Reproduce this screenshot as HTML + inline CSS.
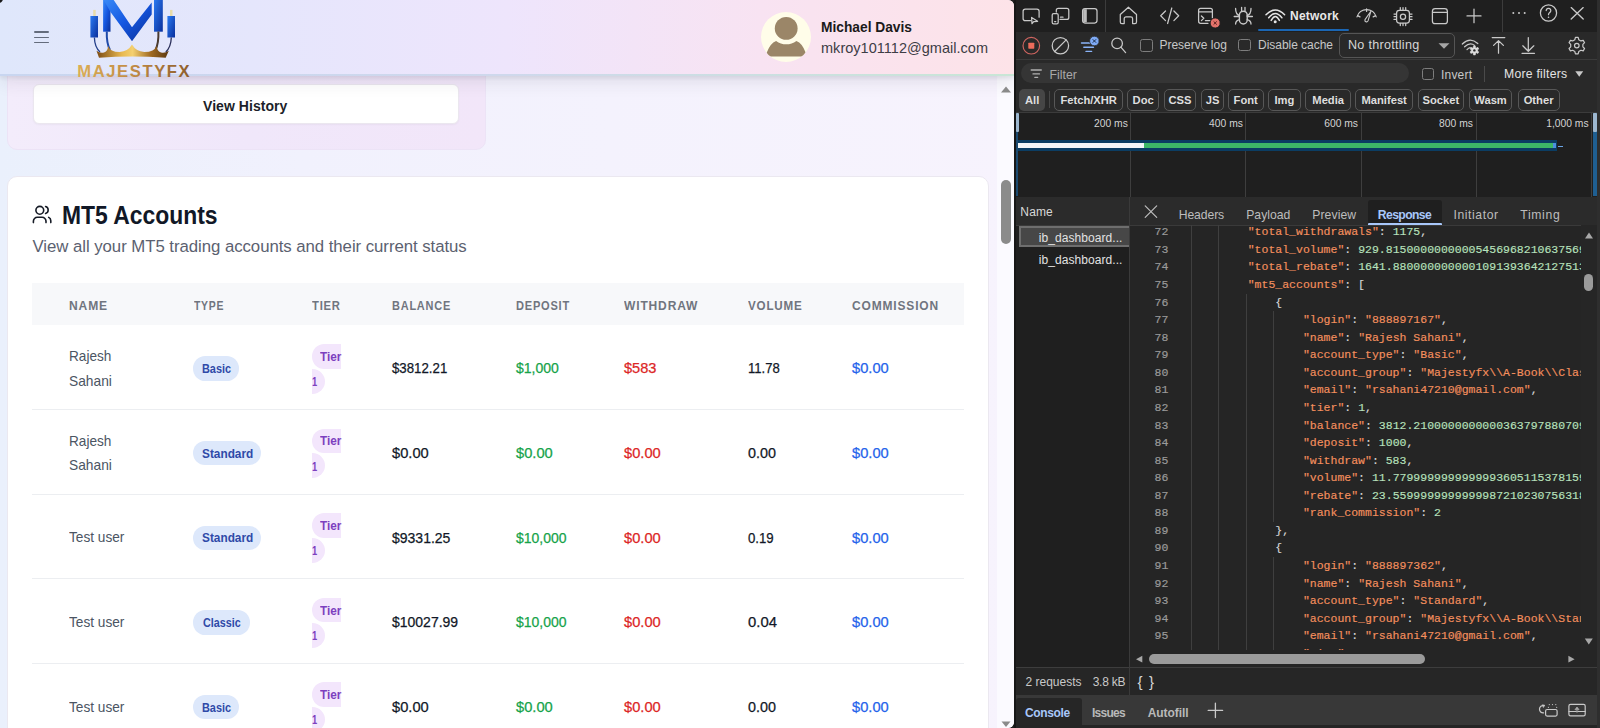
<!DOCTYPE html>
<html><head><meta charset="utf-8"><style>
html,body{margin:0;padding:0;width:1600px;height:728px;overflow:hidden;background:#1f1f1f;}
*{box-sizing:border-box;}
</style></head><body>
<div style="position:absolute;left:0;top:0;width:1014px;height:728px;overflow:hidden;border-radius:0 6px 6px 0;background:linear-gradient(90deg,#eaf0fc 0%,#f1f1fd 30%,#f4f2fd 60%,#f7f3fd 100%);"><div style="position:absolute;left:997px;top:76px;width:17px;height:652px;background:#fbfaff;"></div><div style="position:absolute;left:7px;top:20px;width:479px;height:130px;border-radius:10px;border:1px solid #ece3f6;background:linear-gradient(90deg,#f3ecfb,#f0e7fa 50%,#f2e6f9);"></div><div style="position:absolute;left:33px;top:84px;width:426px;height:40px;border-radius:6px;background:#fff;border:1px solid #ebe7ef;box-shadow:0 1px 2px rgba(0,0,0,0.04);"></div><div style="position:absolute;left:203px;top:98.65px;font:bold 14px/14px 'Liberation Sans', sans-serif;color:#1c1f2a;letter-spacing:0.050px;white-space:pre;">View History</div><div style="position:absolute;left:0;top:0;width:1014px;height:76px;background:linear-gradient(90deg,#dfe7fb 0%,#e5e6fc 25%,#eee5fc 50%,#f8e3f2 75%,#fde3e8 100%);border-bottom:2px solid transparent;box-shadow:0 2px 4px rgba(40,40,60,0.08),0 6px 16px rgba(40,40,60,0.10);"></div><div style="position:absolute;left:0;top:74px;width:1014px;height:2px;background:linear-gradient(90deg,#c9d6f0,#cfd8ec 50%,#c9e6d6);"></div><div style="position:absolute;left:34px;top:31.4px;width:15px;height:1.2px;background:#646c7c;border-radius:1px;"></div><div style="position:absolute;left:34px;top:36.699999999999996px;width:15px;height:1.2px;background:#646c7c;border-radius:1px;"></div><div style="position:absolute;left:34px;top:42.0px;width:15px;height:1.2px;background:#646c7c;border-radius:1px;"></div><svg style="position:absolute;left:70px;top:0" width="130" height="80" viewBox="70 0 130 80">
<defs>
<linearGradient id="bl" x1="0" y1="0" x2="1" y2="1"><stop offset="0" stop-color="#2a7af2"/><stop offset="1" stop-color="#0a2f9c"/></linearGradient>
<linearGradient id="bl2" x1="0" y1="0" x2="1" y2="1"><stop offset="0" stop-color="#3a8cf8"/><stop offset="0.5" stop-color="#1456e0"/><stop offset="1" stop-color="#0b2f96"/></linearGradient>
<linearGradient id="gd" x1="0" y1="0" x2="1" y2="0"><stop offset="0" stop-color="#7a4a14"/><stop offset="0.35" stop-color="#e8b850"/><stop offset="0.5" stop-color="#f4d070"/><stop offset="0.75" stop-color="#a06a22"/><stop offset="1" stop-color="#5a3810"/></linearGradient>
<linearGradient id="gt" x1="0" y1="0" x2="1" y2="0"><stop offset="0" stop-color="#dcae55"/><stop offset="0.5" stop-color="#c08a45"/><stop offset="1" stop-color="#8e5e2c"/></linearGradient>
</defs>
<rect x="93.2" y="9.9" width="2.5" height="6.2" fill="#e8dcaa"/>
<rect x="170" y="9.9" width="2.5" height="6.2" fill="#e8dcaa"/>
<rect x="90.4" y="16" width="7.6" height="21.5" fill="url(#bl)"/>
<rect x="167.4" y="16" width="7.6" height="21.5" fill="url(#bl)"/>
<rect x="103.1" y="-1" width="7.4" height="32.7" fill="url(#bl2)"/>
<rect x="154" y="-1" width="8.8" height="32.7" fill="url(#bl)"/>
<path d="M103.1 -1 L113 -1 L132 27.2 L151.7 2.5 L151.7 14.5 L132 41.2 L110.5 12 Z" fill="url(#bl2)"/>
<path d="M94.4 37.5 Q94.6 47 100 52" stroke="#233f8a" stroke-width="1.3" fill="none"/>
<path d="M171.3 37.5 Q171 47 165.8 52" stroke="#2a2f5a" stroke-width="1.3" fill="none"/>
<path d="M106.8 31.5 Q106.4 43 110 50" stroke="#1f4aa8" stroke-width="2" fill="none"/>
<path d="M158.4 31.5 Q158.8 43 155.5 50" stroke="#4a3a30" stroke-width="2" fill="none"/>
<path d="M99 57.7 L96.5 50.8 Q100 53.6 104 52.6 Q107.5 51.6 108.2 46 Q110 52 119.6 52 Q128 51.5 132 44.5 Q136 51.5 144.3 52 Q154.5 52 156.5 46 Q157.5 51.6 161 52.6 Q165 53.6 168.8 50.8 L165.7 57.7 Q132 55.3 99 57.7 Z" fill="url(#gd)"/>
<text x="77.2" y="77.4" font-family="Liberation Sans" font-weight="bold" font-size="16.6" textLength="112.5" lengthAdjust="spacing" fill="url(#gt)">MAJESTYFX</text>
</svg><svg style="position:absolute;left:760px;top:11px" width="52" height="52" viewBox="760 11 52 52">
<defs><clipPath id="avc"><circle cx="786" cy="37" r="25"/></clipPath></defs>
<circle cx="786" cy="37" r="25" fill="#fffde9"/>
<g clip-path="url(#avc)" fill="#9b8668">
<circle cx="786.2" cy="28.4" r="11.4"/>
<path d="M765.5 56.6 L766.8 52.6 Q770.2 43.2 776.1 41 A17 17 0 0 0 796.4 41 Q802.3 43.2 805.6 52.6 L807 56.6 Z"/>
</g>
</svg><div style="position:absolute;left:821px;top:19.87px;font:bold 14.8px/14.8px 'Liberation Sans', sans-serif;color:#1a1a1a;letter-spacing:0.000px;white-space:pre;transform:scaleX(0.9296);transform-origin:0 0;">Michael Davis</div><div style="position:absolute;left:821px;top:41.43px;font:normal 14.5px/14.5px 'Liberation Sans', sans-serif;color:#3d3d45;letter-spacing:0.025px;white-space:pre;">mkroy101112@gmail.com</div><div style="position:absolute;left:7px;top:176px;width:982px;height:600px;border-radius:10px;background:#fff;border:1px solid #ebe8f0;"></div><svg style="position:absolute;left:26px;top:198px" width="40" height="34" viewBox="26 198 40 34" fill="none" stroke="#161b26" stroke-width="1.6" stroke-linecap="round">
<circle cx="39.8" cy="210.3" r="3.9"/>
<path d="M33.4 222.6 v-1.4 a3.9 3.9 0 0 1 3.9 -3.9 h4.8 a3.9 3.9 0 0 1 3.9 3.9 v1.4"/>
<path d="M45.6 206.5 a3.6 3.6 0 0 1 0 6.9"/>
<path d="M48.7 217.4 a3.7 3.7 0 0 1 2.1 3.3 v1.9"/>
</svg><div style="position:absolute;left:61.8px;top:203.14px;font:bold 25px/25px 'Liberation Sans', sans-serif;color:#111827;letter-spacing:0.000px;white-space:pre;transform:scaleX(0.9157);transform-origin:0 0;">MT5 Accounts</div><div style="position:absolute;left:32.5px;top:239.18px;font:normal 16.8px/16.8px 'Liberation Sans', sans-serif;color:#5b6170;letter-spacing:-0.050px;white-space:pre;">View all your MT5 trading accounts and their current status</div><div style="position:absolute;left:32px;top:283.3px;width:932px;height:42px;background:#f7f8fa;"></div><div style="position:absolute;left:68.7px;top:299.76px;font:bold 12.8px/12.8px 'Liberation Sans', sans-serif;color:#70757f;letter-spacing:0.900px;white-space:pre;transform:scaleX(0.9433);transform-origin:0 0;">NAME</div><div style="position:absolute;left:194px;top:299.76px;font:bold 12.8px/12.8px 'Liberation Sans', sans-serif;color:#70757f;letter-spacing:0.900px;white-space:pre;transform:scaleX(0.8164);transform-origin:0 0;">TYPE</div><div style="position:absolute;left:311.8px;top:299.76px;font:bold 12.8px/12.8px 'Liberation Sans', sans-serif;color:#70757f;letter-spacing:0.900px;white-space:pre;transform:scaleX(0.8789);transform-origin:0 0;">TIER</div><div style="position:absolute;left:392.2px;top:299.76px;font:bold 12.8px/12.8px 'Liberation Sans', sans-serif;color:#70757f;letter-spacing:0.900px;white-space:pre;transform:scaleX(0.8576);transform-origin:0 0;">BALANCE</div><div style="position:absolute;left:516px;top:299.76px;font:bold 12.8px/12.8px 'Liberation Sans', sans-serif;color:#70757f;letter-spacing:0.900px;white-space:pre;transform:scaleX(0.8638);transform-origin:0 0;">DEPOSIT</div><div style="position:absolute;left:623.6px;top:299.76px;font:bold 12.8px/12.8px 'Liberation Sans', sans-serif;color:#70757f;letter-spacing:0.900px;white-space:pre;transform:scaleX(0.9397);transform-origin:0 0;">WITHDRAW</div><div style="position:absolute;left:748px;top:299.76px;font:bold 12.8px/12.8px 'Liberation Sans', sans-serif;color:#70757f;letter-spacing:0.900px;white-space:pre;transform:scaleX(0.9079);transform-origin:0 0;">VOLUME</div><div style="position:absolute;left:852px;top:299.76px;font:bold 12.8px/12.8px 'Liberation Sans', sans-serif;color:#70757f;letter-spacing:0.900px;white-space:pre;transform:scaleX(0.9368);transform-origin:0 0;">COMMISSION</div><div style="position:absolute;left:32px;top:408.9px;width:932px;height:1px;background:#eceef1;"></div><div style="position:absolute;left:68.7px;top:349.07px;font:normal 14.8px/14.8px 'Liberation Sans', sans-serif;color:#4b5563;letter-spacing:0.000px;white-space:pre;transform:scaleX(0.9203);transform-origin:0 0;">Rajesh</div><div style="position:absolute;left:68.7px;top:373.77px;font:normal 14.8px/14.8px 'Liberation Sans', sans-serif;color:#4b5563;letter-spacing:0.000px;white-space:pre;transform:scaleX(0.9309);transform-origin:0 0;">Sahani</div><div style="position:absolute;left:193.1px;top:356.30px;width:45.5px;height:24.6px;border-radius:12.3px;background:#dde8fb;"></div><div style="position:absolute;left:201.7px;top:363.25px;font:bold 12.4px/12.4px 'Liberation Sans', sans-serif;color:#2f4aa8;letter-spacing:0.000px;white-space:pre;transform:scaleX(0.8794);transform-origin:0 0;">Basic</div><div style="position:absolute;left:311.6px;top:344.00px;width:29.1px;height:24.5px;border-radius:12.25px 0 0 12.25px;background:#f3e6fc;"></div><div style="position:absolute;left:311.6px;top:368.85px;width:13.3px;height:25px;border-radius:0 12.5px 12.5px 0;background:#f3e6fc;"></div><div style="position:absolute;left:320px;top:350.74px;font:bold 12.3px/12.3px 'Liberation Sans', sans-serif;color:#7d40bf;letter-spacing:0.000px;white-space:pre;transform:scaleX(0.9581);transform-origin:0 0;">Tier</div><div style="position:absolute;left:311.8px;top:375.94px;font:bold 12.3px/12.3px 'Liberation Sans', sans-serif;color:#7d40bf;letter-spacing:0.000px;white-space:pre;transform:scaleX(0.7601);transform-origin:0 0;">1</div><div style="position:absolute;left:392.2px;top:361.37px;font:normal 14.8px/14.8px 'Liberation Sans', sans-serif;color:#111827;letter-spacing:0.000px;white-space:pre;transform:scaleX(0.8958);transform-origin:0 0;-webkit-text-stroke:0.25px #111827;">$3812.21</div><div style="position:absolute;left:516px;top:361.37px;font:normal 14.8px/14.8px 'Liberation Sans', sans-serif;color:#16a34a;letter-spacing:0.000px;white-space:pre;transform:scaleX(0.9477);transform-origin:0 0;-webkit-text-stroke:0.25px #16a34a;">$1,000</div><div style="position:absolute;left:623.6px;top:361.37px;font:normal 14.8px/14.8px 'Liberation Sans', sans-serif;color:#dc2626;letter-spacing:0.000px;white-space:pre;transform:scaleX(0.9871);transform-origin:0 0;-webkit-text-stroke:0.25px #dc2626;">$583</div><div style="position:absolute;left:748px;top:361.37px;font:normal 14.8px/14.8px 'Liberation Sans', sans-serif;color:#111827;letter-spacing:0.000px;white-space:pre;transform:scaleX(0.8848);transform-origin:0 0;-webkit-text-stroke:0.25px #111827;">11.78</div><div style="position:absolute;left:852px;top:361.37px;font:normal 14.8px/14.8px 'Liberation Sans', sans-serif;color:#2563eb;letter-spacing:0.000px;white-space:pre;transform:scaleX(0.9909);transform-origin:0 0;-webkit-text-stroke:0.25px #2563eb;">$0.00</div><div style="position:absolute;left:32px;top:493.5px;width:932px;height:1px;background:#eceef1;"></div><div style="position:absolute;left:68.7px;top:433.67px;font:normal 14.8px/14.8px 'Liberation Sans', sans-serif;color:#4b5563;letter-spacing:0.000px;white-space:pre;transform:scaleX(0.9203);transform-origin:0 0;">Rajesh</div><div style="position:absolute;left:68.7px;top:458.37px;font:normal 14.8px/14.8px 'Liberation Sans', sans-serif;color:#4b5563;letter-spacing:0.000px;white-space:pre;transform:scaleX(0.9309);transform-origin:0 0;">Sahani</div><div style="position:absolute;left:193.1px;top:440.90px;width:67.6px;height:24.6px;border-radius:12.3px;background:#dde8fb;"></div><div style="position:absolute;left:201.65px;top:447.85px;font:bold 12.4px/12.4px 'Liberation Sans', sans-serif;color:#2f4aa8;letter-spacing:0.000px;white-space:pre;transform:scaleX(0.9545);transform-origin:0 0;">Standard</div><div style="position:absolute;left:311.6px;top:428.60px;width:29.1px;height:24.5px;border-radius:12.25px 0 0 12.25px;background:#f3e6fc;"></div><div style="position:absolute;left:311.6px;top:453.45px;width:13.3px;height:25px;border-radius:0 12.5px 12.5px 0;background:#f3e6fc;"></div><div style="position:absolute;left:320px;top:435.34px;font:bold 12.3px/12.3px 'Liberation Sans', sans-serif;color:#7d40bf;letter-spacing:0.000px;white-space:pre;transform:scaleX(0.9581);transform-origin:0 0;">Tier</div><div style="position:absolute;left:311.8px;top:460.54px;font:bold 12.3px/12.3px 'Liberation Sans', sans-serif;color:#7d40bf;letter-spacing:0.000px;white-space:pre;transform:scaleX(0.7601);transform-origin:0 0;">1</div><div style="position:absolute;left:392.2px;top:445.97px;font:normal 14.8px/14.8px 'Liberation Sans', sans-serif;color:#111827;letter-spacing:0.000px;white-space:pre;transform:scaleX(0.9909);transform-origin:0 0;-webkit-text-stroke:0.25px #111827;">$0.00</div><div style="position:absolute;left:516px;top:445.97px;font:normal 14.8px/14.8px 'Liberation Sans', sans-serif;color:#16a34a;letter-spacing:0.000px;white-space:pre;transform:scaleX(0.9909);transform-origin:0 0;-webkit-text-stroke:0.25px #16a34a;">$0.00</div><div style="position:absolute;left:623.6px;top:445.97px;font:normal 14.8px/14.8px 'Liberation Sans', sans-serif;color:#dc2626;letter-spacing:0.000px;white-space:pre;transform:scaleX(0.9909);transform-origin:0 0;-webkit-text-stroke:0.25px #dc2626;">$0.00</div><div style="position:absolute;left:748px;top:445.97px;font:normal 14.8px/14.8px 'Liberation Sans', sans-serif;color:#111827;letter-spacing:0.000px;white-space:pre;transform:scaleX(0.9686);transform-origin:0 0;-webkit-text-stroke:0.25px #111827;">0.00</div><div style="position:absolute;left:852px;top:445.97px;font:normal 14.8px/14.8px 'Liberation Sans', sans-serif;color:#2563eb;letter-spacing:0.000px;white-space:pre;transform:scaleX(0.9909);transform-origin:0 0;-webkit-text-stroke:0.25px #2563eb;">$0.00</div><div style="position:absolute;left:32px;top:578.1px;width:932px;height:1px;background:#eceef1;"></div><div style="position:absolute;left:68.7px;top:530.47px;font:normal 14.8px/14.8px 'Liberation Sans', sans-serif;color:#4b5563;letter-spacing:0.000px;white-space:pre;transform:scaleX(0.9226);transform-origin:0 0;">Test user</div><div style="position:absolute;left:193.1px;top:525.50px;width:67.6px;height:24.6px;border-radius:12.3px;background:#dde8fb;"></div><div style="position:absolute;left:201.65px;top:532.45px;font:bold 12.4px/12.4px 'Liberation Sans', sans-serif;color:#2f4aa8;letter-spacing:0.000px;white-space:pre;transform:scaleX(0.9545);transform-origin:0 0;">Standard</div><div style="position:absolute;left:311.6px;top:513.20px;width:29.1px;height:24.5px;border-radius:12.25px 0 0 12.25px;background:#f3e6fc;"></div><div style="position:absolute;left:311.6px;top:538.05px;width:13.3px;height:25px;border-radius:0 12.5px 12.5px 0;background:#f3e6fc;"></div><div style="position:absolute;left:320px;top:519.94px;font:bold 12.3px/12.3px 'Liberation Sans', sans-serif;color:#7d40bf;letter-spacing:0.000px;white-space:pre;transform:scaleX(0.9581);transform-origin:0 0;">Tier</div><div style="position:absolute;left:311.8px;top:545.14px;font:bold 12.3px/12.3px 'Liberation Sans', sans-serif;color:#7d40bf;letter-spacing:0.000px;white-space:pre;transform:scaleX(0.7601);transform-origin:0 0;">1</div><div style="position:absolute;left:392.2px;top:530.57px;font:normal 14.8px/14.8px 'Liberation Sans', sans-serif;color:#111827;letter-spacing:0.000px;white-space:pre;transform:scaleX(0.9460);transform-origin:0 0;-webkit-text-stroke:0.25px #111827;">$9331.25</div><div style="position:absolute;left:516px;top:530.57px;font:normal 14.8px/14.8px 'Liberation Sans', sans-serif;color:#16a34a;letter-spacing:0.000px;white-space:pre;transform:scaleX(0.9439);transform-origin:0 0;-webkit-text-stroke:0.25px #16a34a;">$10,000</div><div style="position:absolute;left:623.6px;top:530.57px;font:normal 14.8px/14.8px 'Liberation Sans', sans-serif;color:#dc2626;letter-spacing:0.000px;white-space:pre;transform:scaleX(0.9909);transform-origin:0 0;-webkit-text-stroke:0.25px #dc2626;">$0.00</div><div style="position:absolute;left:748px;top:530.57px;font:normal 14.8px/14.8px 'Liberation Sans', sans-serif;color:#111827;letter-spacing:0.000px;white-space:pre;transform:scaleX(0.8922);transform-origin:0 0;-webkit-text-stroke:0.25px #111827;">0.19</div><div style="position:absolute;left:852px;top:530.57px;font:normal 14.8px/14.8px 'Liberation Sans', sans-serif;color:#2563eb;letter-spacing:0.000px;white-space:pre;transform:scaleX(0.9909);transform-origin:0 0;-webkit-text-stroke:0.25px #2563eb;">$0.00</div><div style="position:absolute;left:32px;top:662.7px;width:932px;height:1px;background:#eceef1;"></div><div style="position:absolute;left:68.7px;top:615.07px;font:normal 14.8px/14.8px 'Liberation Sans', sans-serif;color:#4b5563;letter-spacing:0.000px;white-space:pre;transform:scaleX(0.9226);transform-origin:0 0;">Test user</div><div style="position:absolute;left:193.1px;top:610.10px;width:56.5px;height:24.6px;border-radius:12.3px;background:#dde8fb;"></div><div style="position:absolute;left:202.9px;top:617.05px;font:bold 12.4px/12.4px 'Liberation Sans', sans-serif;color:#2f4aa8;letter-spacing:0.000px;white-space:pre;transform:scaleX(0.8680);transform-origin:0 0;">Classic</div><div style="position:absolute;left:311.6px;top:597.80px;width:29.1px;height:24.5px;border-radius:12.25px 0 0 12.25px;background:#f3e6fc;"></div><div style="position:absolute;left:311.6px;top:622.65px;width:13.3px;height:25px;border-radius:0 12.5px 12.5px 0;background:#f3e6fc;"></div><div style="position:absolute;left:320px;top:604.54px;font:bold 12.3px/12.3px 'Liberation Sans', sans-serif;color:#7d40bf;letter-spacing:0.000px;white-space:pre;transform:scaleX(0.9581);transform-origin:0 0;">Tier</div><div style="position:absolute;left:311.8px;top:629.74px;font:bold 12.3px/12.3px 'Liberation Sans', sans-serif;color:#7d40bf;letter-spacing:0.000px;white-space:pre;transform:scaleX(0.7601);transform-origin:0 0;">1</div><div style="position:absolute;left:392.2px;top:615.17px;font:normal 14.8px/14.8px 'Liberation Sans', sans-serif;color:#111827;letter-spacing:0.000px;white-space:pre;transform:scaleX(0.9448);transform-origin:0 0;-webkit-text-stroke:0.25px #111827;">$10027.99</div><div style="position:absolute;left:516px;top:615.17px;font:normal 14.8px/14.8px 'Liberation Sans', sans-serif;color:#16a34a;letter-spacing:0.000px;white-space:pre;transform:scaleX(0.9439);transform-origin:0 0;-webkit-text-stroke:0.25px #16a34a;">$10,000</div><div style="position:absolute;left:623.6px;top:615.17px;font:normal 14.8px/14.8px 'Liberation Sans', sans-serif;color:#dc2626;letter-spacing:0.000px;white-space:pre;transform:scaleX(0.9909);transform-origin:0 0;-webkit-text-stroke:0.25px #dc2626;">$0.00</div><div style="position:absolute;left:748px;top:615.17px;font:normal 14.8px/14.8px 'Liberation Sans', sans-serif;color:#111827;letter-spacing:0.000px;white-space:pre;transform:scaleX(1.0033);transform-origin:0 0;-webkit-text-stroke:0.25px #111827;">0.04</div><div style="position:absolute;left:852px;top:615.17px;font:normal 14.8px/14.8px 'Liberation Sans', sans-serif;color:#2563eb;letter-spacing:0.000px;white-space:pre;transform:scaleX(0.9909);transform-origin:0 0;-webkit-text-stroke:0.25px #2563eb;">$0.00</div><div style="position:absolute;left:68.7px;top:699.67px;font:normal 14.8px/14.8px 'Liberation Sans', sans-serif;color:#4b5563;letter-spacing:0.000px;white-space:pre;transform:scaleX(0.9226);transform-origin:0 0;">Test user</div><div style="position:absolute;left:193.1px;top:694.70px;width:45.5px;height:24.6px;border-radius:12.3px;background:#dde8fb;"></div><div style="position:absolute;left:201.7px;top:701.65px;font:bold 12.4px/12.4px 'Liberation Sans', sans-serif;color:#2f4aa8;letter-spacing:0.000px;white-space:pre;transform:scaleX(0.8794);transform-origin:0 0;">Basic</div><div style="position:absolute;left:311.6px;top:682.40px;width:29.1px;height:24.5px;border-radius:12.25px 0 0 12.25px;background:#f3e6fc;"></div><div style="position:absolute;left:311.6px;top:707.25px;width:13.3px;height:25px;border-radius:0 12.5px 12.5px 0;background:#f3e6fc;"></div><div style="position:absolute;left:320px;top:689.14px;font:bold 12.3px/12.3px 'Liberation Sans', sans-serif;color:#7d40bf;letter-spacing:0.000px;white-space:pre;transform:scaleX(0.9581);transform-origin:0 0;">Tier</div><div style="position:absolute;left:311.8px;top:714.34px;font:bold 12.3px/12.3px 'Liberation Sans', sans-serif;color:#7d40bf;letter-spacing:0.000px;white-space:pre;transform:scaleX(0.7601);transform-origin:0 0;">1</div><div style="position:absolute;left:392.2px;top:699.77px;font:normal 14.8px/14.8px 'Liberation Sans', sans-serif;color:#111827;letter-spacing:0.000px;white-space:pre;transform:scaleX(0.9909);transform-origin:0 0;-webkit-text-stroke:0.25px #111827;">$0.00</div><div style="position:absolute;left:516px;top:699.77px;font:normal 14.8px/14.8px 'Liberation Sans', sans-serif;color:#16a34a;letter-spacing:0.000px;white-space:pre;transform:scaleX(0.9909);transform-origin:0 0;-webkit-text-stroke:0.25px #16a34a;">$0.00</div><div style="position:absolute;left:623.6px;top:699.77px;font:normal 14.8px/14.8px 'Liberation Sans', sans-serif;color:#dc2626;letter-spacing:0.000px;white-space:pre;transform:scaleX(0.9909);transform-origin:0 0;-webkit-text-stroke:0.25px #dc2626;">$0.00</div><div style="position:absolute;left:748px;top:699.77px;font:normal 14.8px/14.8px 'Liberation Sans', sans-serif;color:#111827;letter-spacing:0.000px;white-space:pre;transform:scaleX(0.9686);transform-origin:0 0;-webkit-text-stroke:0.25px #111827;">0.00</div><div style="position:absolute;left:852px;top:699.77px;font:normal 14.8px/14.8px 'Liberation Sans', sans-serif;color:#2563eb;letter-spacing:0.000px;white-space:pre;transform:scaleX(0.9909);transform-origin:0 0;-webkit-text-stroke:0.25px #2563eb;">$0.00</div><div style="position:absolute;left:1001px;top:179.5px;width:10px;height:64px;background:#8b8b8b;border-radius:5px;"></div><svg style="position:absolute;left:1000px;top:84px" width="12" height="10"><path d="M1 8.5 L6 2.5 L11 8.5 Z" fill="#8a8a8a"/></svg><svg style="position:absolute;left:1000px;top:717px" width="12" height="11"><path d="M1.5 4.5 L10.5 4.5 L6 10 Z" fill="#8a8a8a"/></svg></div><div style="position:absolute;left:-6px;top:-6px;width:9px;height:9px;border-radius:50%;background:#1a1a1a;"></div><div style="position:absolute;left:1014px;top:0px;width:586px;height:728px;background:#1f1f1f;"></div><div style="position:absolute;left:1014px;top:0px;width:2px;height:728px;background:#171717;"></div><div style="position:absolute;left:1016px;top:0px;width:581px;height:32px;background:#1f1f1f;"></div><div style="position:absolute;left:1016px;top:32px;width:581px;height:26.5px;background:#292929;"></div><div style="position:absolute;left:1016px;top:58.5px;width:581px;height:1px;background:#3b3b3b;"></div><div style="position:absolute;left:1016px;top:59.5px;width:581px;height:52.3px;background:#292929;"></div><div style="position:absolute;left:1016px;top:111.8px;width:581px;height:1px;background:#3b3b3b;"></div><div style="position:absolute;left:1016px;top:112.8px;width:581px;height:84.2px;background:#1f1f1f;"></div><div style="position:absolute;left:1016px;top:197px;width:581px;height:28.3px;background:#2b2b2b;"></div><div style="position:absolute;left:1016px;top:225.3px;width:581px;height:1px;background:#3a3a3a;"></div><div style="position:absolute;left:1016px;top:226.3px;width:113.5px;height:441px;background:#1f1f1f;"></div><div style="position:absolute;left:1130px;top:226.3px;width:467px;height:441px;background:#252525;"></div><div style="position:absolute;left:1016px;top:667px;width:581px;height:1px;background:#3d3d3d;"></div><div style="position:absolute;left:1016px;top:668px;width:581px;height:27px;background:#262626;"></div><div style="position:absolute;left:1016px;top:695px;width:581px;height:30px;background:#383838;"></div><div style="position:absolute;left:1016px;top:725px;width:581px;height:3px;background:#252525;"></div><div style="position:absolute;left:1129.3px;top:197px;width:1px;height:498px;background:#3a3a3a;"></div><div style="position:absolute;left:1597px;top:0px;width:3px;height:728px;background:#2e2e2e;"></div><div style="position:absolute;left:1105.3px;top:0px;width:1px;height:32px;background:#3c3c3c;"></div><div style="position:absolute;left:1502.2px;top:0px;width:1px;height:32px;background:#3c3c3c;"></div><div style="position:absolute;left:1257.5px;top:28.5px;width:91.3px;height:2.2px;background:#1b66b3;border-radius:1px;"></div><div style="position:absolute;left:1290px;top:10.44px;font:bold 12px/12px 'Liberation Sans', sans-serif;color:#e8e8e8;letter-spacing:0.226px;white-space:pre;">Network</div><div style="position:absolute;left:1159.4px;top:39.24px;font:normal 12px/12px 'Liberation Sans', sans-serif;color:#c7c7c7;letter-spacing:0.012px;white-space:pre;">Preserve log</div><div style="position:absolute;left:1258px;top:39.24px;font:normal 12px/12px 'Liberation Sans', sans-serif;color:#c7c7c7;letter-spacing:-0.031px;white-space:pre;">Disable cache</div><div style="position:absolute;left:1338.8px;top:33px;width:115.8px;height:24.5px;border:1px solid #555;border-radius:5px;"></div><div style="position:absolute;left:1348px;top:38.93px;font:normal 12.6px/12.6px 'Liberation Sans', sans-serif;color:#d6d6d6;letter-spacing:0.272px;white-space:pre;">No throttling</div><div style="position:absolute;left:1140.3px;top:39.4px;width:12.7px;height:12.2px;border:1.2px solid #7d7d7d;border-radius:2.5px;"></div><div style="position:absolute;left:1238px;top:39.4px;width:12.6px;height:12.0px;border:1.2px solid #7d7d7d;border-radius:2.5px;"></div><div style="position:absolute;left:1020.6px;top:62.5px;width:388.2px;height:20.5px;background:#353535;border-radius:10.3px;"></div><div style="position:absolute;left:1049.4px;top:68.59px;font:normal 12.3px/12.3px 'Liberation Sans', sans-serif;color:#a9a9a9;letter-spacing:0.033px;white-space:pre;">Filter</div><div style="position:absolute;left:1421.9px;top:67.5px;width:11.8px;height:12.2px;border:1.2px solid #7d7d7d;border-radius:2.5px;"></div><div style="position:absolute;left:1441px;top:68.59px;font:normal 12px/12px 'Liberation Sans', sans-serif;color:#c7c7c7;letter-spacing:0.198px;white-space:pre;">Invert</div><div style="position:absolute;left:1484.4px;top:65.6px;width:1px;height:16px;background:#4a4a4a;"></div><div style="position:absolute;left:1504px;top:68.42px;font:normal 12.2px/12.2px 'Liberation Sans', sans-serif;color:#e3e3e3;letter-spacing:0.260px;white-space:pre;">More filters</div><div style="position:absolute;left:1019.4px;top:89px;width:25.600000000000023px;height:21.7px;background:#464646;border-radius:5px;"></div><div style="position:absolute;left:1025.04px;top:94.92px;font:bold 11.2px/11.2px 'Liberation Sans', sans-serif;color:#dedede;letter-spacing:0.000px;white-space:pre;">All</div><div style="position:absolute;left:1054.4px;top:89px;width:68.59999999999991px;height:21.7px;border:1px solid #575757;border-radius:5px;"></div><div style="position:absolute;left:1060.38px;top:94.92px;font:bold 11.2px/11.2px 'Liberation Sans', sans-serif;color:#dedede;letter-spacing:0.000px;white-space:pre;">Fetch/XHR</div><div style="position:absolute;left:1126.9px;top:89px;width:32.5px;height:21.7px;border:1px solid #575757;border-radius:5px;"></div><div style="position:absolute;left:1132.57px;top:94.92px;font:bold 11.2px/11.2px 'Liberation Sans', sans-serif;color:#dedede;letter-spacing:0.000px;white-space:pre;">Doc</div><div style="position:absolute;left:1163.75px;top:89px;width:32.5px;height:21.7px;border:1px solid #575757;border-radius:5px;"></div><div style="position:absolute;left:1168.48px;top:94.92px;font:bold 11.2px/11.2px 'Liberation Sans', sans-serif;color:#dedede;letter-spacing:0.000px;white-space:pre;">CSS</div><div style="position:absolute;left:1201.2px;top:89px;width:22.700000000000045px;height:21.7px;border:1px solid #575757;border-radius:5px;"></div><div style="position:absolute;left:1205.7px;top:94.92px;font:bold 11.2px/11.2px 'Liberation Sans', sans-serif;color:#dedede;letter-spacing:0.000px;white-space:pre;">JS</div><div style="position:absolute;left:1228px;top:89px;width:35.5px;height:21.7px;border:1px solid #575757;border-radius:5px;"></div><div style="position:absolute;left:1233.62px;top:94.92px;font:bold 11.2px/11.2px 'Liberation Sans', sans-serif;color:#dedede;letter-spacing:0.000px;white-space:pre;">Font</div><div style="position:absolute;left:1268px;top:89px;width:32.90000000000009px;height:21.7px;border:1px solid #575757;border-radius:5px;"></div><div style="position:absolute;left:1274.49px;top:94.92px;font:bold 11.2px/11.2px 'Liberation Sans', sans-serif;color:#dedede;letter-spacing:0.000px;white-space:pre;">Img</div><div style="position:absolute;left:1305.4px;top:89px;width:45.59999999999991px;height:21.7px;border:1px solid #575757;border-radius:5px;"></div><div style="position:absolute;left:1312.33px;top:94.92px;font:bold 11.2px/11.2px 'Liberation Sans', sans-serif;color:#dedede;letter-spacing:0.000px;white-space:pre;">Media</div><div style="position:absolute;left:1355.4px;top:89px;width:57.59999999999991px;height:21.7px;border:1px solid #575757;border-radius:5px;"></div><div style="position:absolute;left:1361.48px;top:94.92px;font:bold 11.2px/11.2px 'Liberation Sans', sans-serif;color:#dedede;letter-spacing:0.000px;white-space:pre;">Manifest</div><div style="position:absolute;left:1417.75px;top:89px;width:46.25px;height:21.7px;border:1px solid #575757;border-radius:5px;"></div><div style="position:absolute;left:1422.51px;top:94.92px;font:bold 11.2px/11.2px 'Liberation Sans', sans-serif;color:#dedede;letter-spacing:0.000px;white-space:pre;">Socket</div><div style="position:absolute;left:1468.75px;top:89px;width:43.65000000000009px;height:21.7px;border:1px solid #575757;border-radius:5px;"></div><div style="position:absolute;left:1474.29px;top:94.92px;font:bold 11.2px/11.2px 'Liberation Sans', sans-serif;color:#dedede;letter-spacing:0.000px;white-space:pre;">Wasm</div><div style="position:absolute;left:1517.5px;top:89px;width:42.200000000000045px;height:21.7px;border:1px solid #575757;border-radius:5px;"></div><div style="position:absolute;left:1523.66px;top:94.92px;font:bold 11.2px/11.2px 'Liberation Sans', sans-serif;color:#dedede;letter-spacing:0.000px;white-space:pre;">Other</div><div style="position:absolute;left:1049.2px;top:91px;width:1px;height:16.5px;background:#474747;"></div><div style="position:absolute;left:1130px;top:112.8px;width:1px;height:84.2px;background:#3e3e3e;"></div><div style="position:absolute;left:1245.3px;top:112.8px;width:1px;height:84.2px;background:#3e3e3e;"></div><div style="position:absolute;left:1360.6px;top:112.8px;width:1px;height:84.2px;background:#3e3e3e;"></div><div style="position:absolute;left:1475.9px;top:112.8px;width:1px;height:84.2px;background:#3e3e3e;"></div><div style="position:absolute;left:1590.5px;top:112.8px;width:1px;height:84.2px;background:#3e3e3e;"></div><div style="position:absolute;left:1094.02px;top:118.88px;font:normal 10.3px/10.3px 'Liberation Sans', sans-serif;color:#d4d4d4;letter-spacing:0.000px;white-space:pre;">200 ms</div><div style="position:absolute;left:1209.12px;top:118.88px;font:normal 10.3px/10.3px 'Liberation Sans', sans-serif;color:#d4d4d4;letter-spacing:0.000px;white-space:pre;">400 ms</div><div style="position:absolute;left:1324.22px;top:118.88px;font:normal 10.3px/10.3px 'Liberation Sans', sans-serif;color:#d4d4d4;letter-spacing:0.000px;white-space:pre;">600 ms</div><div style="position:absolute;left:1439.12px;top:118.88px;font:normal 10.3px/10.3px 'Liberation Sans', sans-serif;color:#d4d4d4;letter-spacing:0.000px;white-space:pre;">800 ms</div><div style="position:absolute;left:1546.23px;top:118.88px;font:normal 10.3px/10.3px 'Liberation Sans', sans-serif;color:#d4d4d4;letter-spacing:0.000px;white-space:pre;">1,000 ms</div><div style="position:absolute;left:1016px;top:140.2px;width:541px;height:10.8px;background:#0b3d63;"></div><div style="position:absolute;left:1016px;top:142.8px;width:128px;height:5.4px;background:#f4f6f8;"></div><div style="position:absolute;left:1144px;top:142.8px;width:408.5px;height:5.4px;background:#3db767;"></div><div style="position:absolute;left:1552.5px;top:142.8px;width:3.6px;height:5.4px;background:#4b8fe0;"></div><div style="position:absolute;left:1557.7px;top:145.8px;width:5px;height:1.5px;background:#6aa4e6;"></div><div style="position:absolute;left:1015.7px;top:113px;width:2px;height:83px;background:#1b4a70;"></div><div style="position:absolute;left:1015.7px;top:113px;width:3.8px;height:19px;background:#9db7cf;border-radius:1px;"></div><div style="position:absolute;left:1593px;top:113px;width:4px;height:83px;background:#1f5f92;"></div><div style="position:absolute;left:1592.6px;top:113px;width:4.2px;height:19px;background:#9db7cf;border-radius:1px;"></div><div style="position:absolute;left:1020.3px;top:205.84px;font:normal 12px/12px 'Liberation Sans', sans-serif;color:#d8d8d8;letter-spacing:0.163px;white-space:pre;">Name</div><div style="position:absolute;left:1367.5px;top:200px;width:74.5px;height:25.3px;background:#1f1f1f;border-radius:3px 3px 0 0;"></div><div style="position:absolute;left:1367.5px;top:222.5px;width:74.5px;height:2.8px;background:#a8c7fa;border-radius:1px 1px 0 0;"></div><div style="position:absolute;left:1178.75px;top:208.57px;font:normal 12.2px/12.2px 'Liberation Sans', sans-serif;color:#bdbdbd;letter-spacing:-0.103px;white-space:pre;">Headers</div><div style="position:absolute;left:1246.25px;top:208.57px;font:normal 12.2px/12.2px 'Liberation Sans', sans-serif;color:#bdbdbd;letter-spacing:-0.015px;white-space:pre;">Payload</div><div style="position:absolute;left:1312.2px;top:208.57px;font:normal 12.2px/12.2px 'Liberation Sans', sans-serif;color:#bdbdbd;letter-spacing:0.101px;white-space:pre;">Preview</div><div style="position:absolute;left:1377.8px;top:208.57px;font:bold 12.2px/12.2px 'Liberation Sans', sans-serif;color:#a8c7fa;letter-spacing:-0.616px;white-space:pre;">Response</div><div style="position:absolute;left:1453.4px;top:208.57px;font:normal 12.2px/12.2px 'Liberation Sans', sans-serif;color:#bdbdbd;letter-spacing:0.599px;white-space:pre;">Initiator</div><div style="position:absolute;left:1520.3px;top:208.57px;font:normal 12.2px/12.2px 'Liberation Sans', sans-serif;color:#bdbdbd;letter-spacing:0.649px;white-space:pre;">Timing</div><div style="position:absolute;left:1018.5px;top:225.8px;width:110.8px;height:21px;background:#474747;border:2px solid #6e6e6e;border-right:none;"></div><div style="position:absolute;left:1038.7px;top:231.59px;font:normal 12px/12px 'Liberation Sans', sans-serif;color:#e2e2e2;letter-spacing:0.069px;white-space:pre;">ib_dashboard...</div><div style="position:absolute;left:1038.7px;top:253.64px;font:normal 12px/12px 'Liberation Sans', sans-serif;color:#e2e2e2;letter-spacing:0.069px;white-space:pre;">ib_dashboard...</div><div style="position:absolute;left:1025.4px;top:675.74px;font:normal 12px/12px 'Liberation Sans', sans-serif;color:#c9c9c9;letter-spacing:0.018px;white-space:pre;">2 requests</div><div style="position:absolute;left:1092.65px;top:675.74px;font:normal 12px/12px 'Liberation Sans', sans-serif;color:#c9c9c9;letter-spacing:-0.244px;white-space:pre;">3.8 kB</div><div style="position:absolute;left:1137.6px;top:673.80px;font:normal 15px/15px 'Liberation Sans', sans-serif;color:#d6d6d6;letter-spacing:1.157px;white-space:pre;">{ }</div><div style="position:absolute;left:1015.75px;top:698.2px;width:66.2px;height:26.8px;background:#262626;border-radius:3px 3px 0 0;"></div><div style="position:absolute;left:1025.1px;top:707.44px;font:bold 12px/12px 'Liberation Sans', sans-serif;color:#a8c7fa;letter-spacing:-0.390px;white-space:pre;">Console</div><div style="position:absolute;left:1091.9px;top:707.44px;font:bold 12px/12px 'Liberation Sans', sans-serif;color:#b9b9b9;letter-spacing:-0.712px;white-space:pre;">Issues</div><div style="position:absolute;left:1147.7px;top:707.44px;font:bold 12px/12px 'Liberation Sans', sans-serif;color:#b9b9b9;letter-spacing:-0.046px;white-space:pre;">Autofill</div><div style="position:absolute;left:1130px;top:225.3px;width:450.8px;height:425px;overflow:hidden;"><div style="position:absolute;left:60.60px;top:-1.94px;width:1px;height:17.56px;background:#3f3f3f;"></div><div style="position:absolute;left:88.20px;top:-1.94px;width:1px;height:17.56px;background:#3f3f3f;"></div><div style="position:absolute;right:412.50px;top:-1.94px;font:11.5px/17.56px 'Liberation Mono', monospace;color:#9a9a9a;white-space:pre;-webkit-text-stroke:0.2px #9a9a9a;">72</div><div style="position:absolute;left:117.70px;top:-1.94px;font:11.5px/17.56px 'Liberation Mono', monospace;letter-spacing:0px;white-space:pre;-webkit-text-stroke:0.15px currentColor;"><span style="color:#f5905e">&quot;total_withdrawals&quot;</span><span style="color:#d8d8d8">: </span><span style="color:#b8e2bd">1175</span><span style="color:#d8d8d8">,</span></div><div style="position:absolute;left:60.60px;top:15.62px;width:1px;height:17.56px;background:#3f3f3f;"></div><div style="position:absolute;left:88.20px;top:15.62px;width:1px;height:17.56px;background:#3f3f3f;"></div><div style="position:absolute;right:412.50px;top:15.62px;font:11.5px/17.56px 'Liberation Mono', monospace;color:#9a9a9a;white-space:pre;-webkit-text-stroke:0.2px #9a9a9a;">73</div><div style="position:absolute;left:117.70px;top:15.62px;font:11.5px/17.56px 'Liberation Mono', monospace;letter-spacing:0px;white-space:pre;-webkit-text-stroke:0.15px currentColor;"><span style="color:#f5905e">&quot;total_volume&quot;</span><span style="color:#d8d8d8">: </span><span style="color:#b8e2bd">929.8150000000000545696821063756942749</span></div><div style="position:absolute;left:60.60px;top:33.18px;width:1px;height:17.56px;background:#3f3f3f;"></div><div style="position:absolute;left:88.20px;top:33.18px;width:1px;height:17.56px;background:#3f3f3f;"></div><div style="position:absolute;right:412.50px;top:33.18px;font:11.5px/17.56px 'Liberation Mono', monospace;color:#9a9a9a;white-space:pre;-webkit-text-stroke:0.2px #9a9a9a;">74</div><div style="position:absolute;left:117.70px;top:33.18px;font:11.5px/17.56px 'Liberation Mono', monospace;letter-spacing:0px;white-space:pre;-webkit-text-stroke:0.15px currentColor;"><span style="color:#f5905e">&quot;total_rebate&quot;</span><span style="color:#d8d8d8">: </span><span style="color:#b8e2bd">1641.8800000000001091393642127513885498</span></div><div style="position:absolute;left:60.60px;top:50.74px;width:1px;height:17.56px;background:#3f3f3f;"></div><div style="position:absolute;left:88.20px;top:50.74px;width:1px;height:17.56px;background:#3f3f3f;"></div><div style="position:absolute;right:412.50px;top:50.74px;font:11.5px/17.56px 'Liberation Mono', monospace;color:#9a9a9a;white-space:pre;-webkit-text-stroke:0.2px #9a9a9a;">75</div><div style="position:absolute;left:117.70px;top:50.74px;font:11.5px/17.56px 'Liberation Mono', monospace;letter-spacing:0px;white-space:pre;-webkit-text-stroke:0.15px currentColor;"><span style="color:#f5905e">&quot;mt5_accounts&quot;</span><span style="color:#d8d8d8">: [</span></div><div style="position:absolute;left:60.60px;top:68.30px;width:1px;height:17.56px;background:#3f3f3f;"></div><div style="position:absolute;left:88.20px;top:68.30px;width:1px;height:17.56px;background:#3f3f3f;"></div><div style="position:absolute;left:115.80px;top:68.30px;width:1px;height:17.56px;background:#3f3f3f;"></div><div style="position:absolute;right:412.50px;top:68.30px;font:11.5px/17.56px 'Liberation Mono', monospace;color:#9a9a9a;white-space:pre;-webkit-text-stroke:0.2px #9a9a9a;">76</div><div style="position:absolute;left:145.30px;top:68.30px;font:11.5px/17.56px 'Liberation Mono', monospace;letter-spacing:0px;white-space:pre;-webkit-text-stroke:0.15px currentColor;"><span style="color:#d8d8d8">{</span></div><div style="position:absolute;left:60.60px;top:85.86px;width:1px;height:17.56px;background:#3f3f3f;"></div><div style="position:absolute;left:88.20px;top:85.86px;width:1px;height:17.56px;background:#3f3f3f;"></div><div style="position:absolute;left:115.80px;top:85.86px;width:1px;height:17.56px;background:#3f3f3f;"></div><div style="position:absolute;left:143.40px;top:85.86px;width:1px;height:17.56px;background:#3f3f3f;"></div><div style="position:absolute;right:412.50px;top:85.86px;font:11.5px/17.56px 'Liberation Mono', monospace;color:#9a9a9a;white-space:pre;-webkit-text-stroke:0.2px #9a9a9a;">77</div><div style="position:absolute;left:172.90px;top:85.86px;font:11.5px/17.56px 'Liberation Mono', monospace;letter-spacing:0px;white-space:pre;-webkit-text-stroke:0.15px currentColor;"><span style="color:#f5905e">&quot;login&quot;</span><span style="color:#d8d8d8">: </span><span style="color:#f5905e">&quot;888897167&quot;</span><span style="color:#d8d8d8">,</span></div><div style="position:absolute;left:60.60px;top:103.42px;width:1px;height:17.56px;background:#3f3f3f;"></div><div style="position:absolute;left:88.20px;top:103.42px;width:1px;height:17.56px;background:#3f3f3f;"></div><div style="position:absolute;left:115.80px;top:103.42px;width:1px;height:17.56px;background:#3f3f3f;"></div><div style="position:absolute;left:143.40px;top:103.42px;width:1px;height:17.56px;background:#3f3f3f;"></div><div style="position:absolute;right:412.50px;top:103.42px;font:11.5px/17.56px 'Liberation Mono', monospace;color:#9a9a9a;white-space:pre;-webkit-text-stroke:0.2px #9a9a9a;">78</div><div style="position:absolute;left:172.90px;top:103.42px;font:11.5px/17.56px 'Liberation Mono', monospace;letter-spacing:0px;white-space:pre;-webkit-text-stroke:0.15px currentColor;"><span style="color:#f5905e">&quot;name&quot;</span><span style="color:#d8d8d8">: </span><span style="color:#f5905e">&quot;Rajesh Sahani&quot;</span><span style="color:#d8d8d8">,</span></div><div style="position:absolute;left:60.60px;top:120.98px;width:1px;height:17.56px;background:#3f3f3f;"></div><div style="position:absolute;left:88.20px;top:120.98px;width:1px;height:17.56px;background:#3f3f3f;"></div><div style="position:absolute;left:115.80px;top:120.98px;width:1px;height:17.56px;background:#3f3f3f;"></div><div style="position:absolute;left:143.40px;top:120.98px;width:1px;height:17.56px;background:#3f3f3f;"></div><div style="position:absolute;right:412.50px;top:120.98px;font:11.5px/17.56px 'Liberation Mono', monospace;color:#9a9a9a;white-space:pre;-webkit-text-stroke:0.2px #9a9a9a;">79</div><div style="position:absolute;left:172.90px;top:120.98px;font:11.5px/17.56px 'Liberation Mono', monospace;letter-spacing:0px;white-space:pre;-webkit-text-stroke:0.15px currentColor;"><span style="color:#f5905e">&quot;account_type&quot;</span><span style="color:#d8d8d8">: </span><span style="color:#f5905e">&quot;Basic&quot;</span><span style="color:#d8d8d8">,</span></div><div style="position:absolute;left:60.60px;top:138.54px;width:1px;height:17.56px;background:#3f3f3f;"></div><div style="position:absolute;left:88.20px;top:138.54px;width:1px;height:17.56px;background:#3f3f3f;"></div><div style="position:absolute;left:115.80px;top:138.54px;width:1px;height:17.56px;background:#3f3f3f;"></div><div style="position:absolute;left:143.40px;top:138.54px;width:1px;height:17.56px;background:#3f3f3f;"></div><div style="position:absolute;right:412.50px;top:138.54px;font:11.5px/17.56px 'Liberation Mono', monospace;color:#9a9a9a;white-space:pre;-webkit-text-stroke:0.2px #9a9a9a;">80</div><div style="position:absolute;left:172.90px;top:138.54px;font:11.5px/17.56px 'Liberation Mono', monospace;letter-spacing:0px;white-space:pre;-webkit-text-stroke:0.15px currentColor;"><span style="color:#f5905e">&quot;account_group&quot;</span><span style="color:#d8d8d8">: </span><span style="color:#f5905e">&quot;Majestyfx\\A-Book\\Classic&quot;</span><span style="color:#d8d8d8">,</span></div><div style="position:absolute;left:60.60px;top:156.10px;width:1px;height:17.56px;background:#3f3f3f;"></div><div style="position:absolute;left:88.20px;top:156.10px;width:1px;height:17.56px;background:#3f3f3f;"></div><div style="position:absolute;left:115.80px;top:156.10px;width:1px;height:17.56px;background:#3f3f3f;"></div><div style="position:absolute;left:143.40px;top:156.10px;width:1px;height:17.56px;background:#3f3f3f;"></div><div style="position:absolute;right:412.50px;top:156.10px;font:11.5px/17.56px 'Liberation Mono', monospace;color:#9a9a9a;white-space:pre;-webkit-text-stroke:0.2px #9a9a9a;">81</div><div style="position:absolute;left:172.90px;top:156.10px;font:11.5px/17.56px 'Liberation Mono', monospace;letter-spacing:0px;white-space:pre;-webkit-text-stroke:0.15px currentColor;"><span style="color:#f5905e">&quot;email&quot;</span><span style="color:#d8d8d8">: </span><span style="color:#f5905e">&quot;rsahani47210@gmail.com&quot;</span><span style="color:#d8d8d8">,</span></div><div style="position:absolute;left:60.60px;top:173.66px;width:1px;height:17.56px;background:#3f3f3f;"></div><div style="position:absolute;left:88.20px;top:173.66px;width:1px;height:17.56px;background:#3f3f3f;"></div><div style="position:absolute;left:115.80px;top:173.66px;width:1px;height:17.56px;background:#3f3f3f;"></div><div style="position:absolute;left:143.40px;top:173.66px;width:1px;height:17.56px;background:#3f3f3f;"></div><div style="position:absolute;right:412.50px;top:173.66px;font:11.5px/17.56px 'Liberation Mono', monospace;color:#9a9a9a;white-space:pre;-webkit-text-stroke:0.2px #9a9a9a;">82</div><div style="position:absolute;left:172.90px;top:173.66px;font:11.5px/17.56px 'Liberation Mono', monospace;letter-spacing:0px;white-space:pre;-webkit-text-stroke:0.15px currentColor;"><span style="color:#f5905e">&quot;tier&quot;</span><span style="color:#d8d8d8">: </span><span style="color:#b8e2bd">1</span><span style="color:#d8d8d8">,</span></div><div style="position:absolute;left:60.60px;top:191.22px;width:1px;height:17.56px;background:#3f3f3f;"></div><div style="position:absolute;left:88.20px;top:191.22px;width:1px;height:17.56px;background:#3f3f3f;"></div><div style="position:absolute;left:115.80px;top:191.22px;width:1px;height:17.56px;background:#3f3f3f;"></div><div style="position:absolute;left:143.40px;top:191.22px;width:1px;height:17.56px;background:#3f3f3f;"></div><div style="position:absolute;right:412.50px;top:191.22px;font:11.5px/17.56px 'Liberation Mono', monospace;color:#9a9a9a;white-space:pre;-webkit-text-stroke:0.2px #9a9a9a;">83</div><div style="position:absolute;left:172.90px;top:191.22px;font:11.5px/17.56px 'Liberation Mono', monospace;letter-spacing:0px;white-space:pre;-webkit-text-stroke:0.15px currentColor;"><span style="color:#f5905e">&quot;balance&quot;</span><span style="color:#d8d8d8">: </span><span style="color:#b8e2bd">3812.2100000000000363797880709171295166</span></div><div style="position:absolute;left:60.60px;top:208.78px;width:1px;height:17.56px;background:#3f3f3f;"></div><div style="position:absolute;left:88.20px;top:208.78px;width:1px;height:17.56px;background:#3f3f3f;"></div><div style="position:absolute;left:115.80px;top:208.78px;width:1px;height:17.56px;background:#3f3f3f;"></div><div style="position:absolute;left:143.40px;top:208.78px;width:1px;height:17.56px;background:#3f3f3f;"></div><div style="position:absolute;right:412.50px;top:208.78px;font:11.5px/17.56px 'Liberation Mono', monospace;color:#9a9a9a;white-space:pre;-webkit-text-stroke:0.2px #9a9a9a;">84</div><div style="position:absolute;left:172.90px;top:208.78px;font:11.5px/17.56px 'Liberation Mono', monospace;letter-spacing:0px;white-space:pre;-webkit-text-stroke:0.15px currentColor;"><span style="color:#f5905e">&quot;deposit&quot;</span><span style="color:#d8d8d8">: </span><span style="color:#b8e2bd">1000</span><span style="color:#d8d8d8">,</span></div><div style="position:absolute;left:60.60px;top:226.34px;width:1px;height:17.56px;background:#3f3f3f;"></div><div style="position:absolute;left:88.20px;top:226.34px;width:1px;height:17.56px;background:#3f3f3f;"></div><div style="position:absolute;left:115.80px;top:226.34px;width:1px;height:17.56px;background:#3f3f3f;"></div><div style="position:absolute;left:143.40px;top:226.34px;width:1px;height:17.56px;background:#3f3f3f;"></div><div style="position:absolute;right:412.50px;top:226.34px;font:11.5px/17.56px 'Liberation Mono', monospace;color:#9a9a9a;white-space:pre;-webkit-text-stroke:0.2px #9a9a9a;">85</div><div style="position:absolute;left:172.90px;top:226.34px;font:11.5px/17.56px 'Liberation Mono', monospace;letter-spacing:0px;white-space:pre;-webkit-text-stroke:0.15px currentColor;"><span style="color:#f5905e">&quot;withdraw&quot;</span><span style="color:#d8d8d8">: </span><span style="color:#b8e2bd">583</span><span style="color:#d8d8d8">,</span></div><div style="position:absolute;left:60.60px;top:243.90px;width:1px;height:17.56px;background:#3f3f3f;"></div><div style="position:absolute;left:88.20px;top:243.90px;width:1px;height:17.56px;background:#3f3f3f;"></div><div style="position:absolute;left:115.80px;top:243.90px;width:1px;height:17.56px;background:#3f3f3f;"></div><div style="position:absolute;left:143.40px;top:243.90px;width:1px;height:17.56px;background:#3f3f3f;"></div><div style="position:absolute;right:412.50px;top:243.90px;font:11.5px/17.56px 'Liberation Mono', monospace;color:#9a9a9a;white-space:pre;-webkit-text-stroke:0.2px #9a9a9a;">86</div><div style="position:absolute;left:172.90px;top:243.90px;font:11.5px/17.56px 'Liberation Mono', monospace;letter-spacing:0px;white-space:pre;-webkit-text-stroke:0.15px currentColor;"><span style="color:#f5905e">&quot;volume&quot;</span><span style="color:#d8d8d8">: </span><span style="color:#b8e2bd">11.7799999999999993605115378159098327160</span></div><div style="position:absolute;left:60.60px;top:261.46px;width:1px;height:17.56px;background:#3f3f3f;"></div><div style="position:absolute;left:88.20px;top:261.46px;width:1px;height:17.56px;background:#3f3f3f;"></div><div style="position:absolute;left:115.80px;top:261.46px;width:1px;height:17.56px;background:#3f3f3f;"></div><div style="position:absolute;left:143.40px;top:261.46px;width:1px;height:17.56px;background:#3f3f3f;"></div><div style="position:absolute;right:412.50px;top:261.46px;font:11.5px/17.56px 'Liberation Mono', monospace;color:#9a9a9a;white-space:pre;-webkit-text-stroke:0.2px #9a9a9a;">87</div><div style="position:absolute;left:172.90px;top:261.46px;font:11.5px/17.56px 'Liberation Mono', monospace;letter-spacing:0px;white-space:pre;-webkit-text-stroke:0.15px currentColor;"><span style="color:#f5905e">&quot;rebate&quot;</span><span style="color:#d8d8d8">: </span><span style="color:#b8e2bd">23.5599999999999987210230756318196654320</span></div><div style="position:absolute;left:60.60px;top:279.02px;width:1px;height:17.56px;background:#3f3f3f;"></div><div style="position:absolute;left:88.20px;top:279.02px;width:1px;height:17.56px;background:#3f3f3f;"></div><div style="position:absolute;left:115.80px;top:279.02px;width:1px;height:17.56px;background:#3f3f3f;"></div><div style="position:absolute;left:143.40px;top:279.02px;width:1px;height:17.56px;background:#3f3f3f;"></div><div style="position:absolute;right:412.50px;top:279.02px;font:11.5px/17.56px 'Liberation Mono', monospace;color:#9a9a9a;white-space:pre;-webkit-text-stroke:0.2px #9a9a9a;">88</div><div style="position:absolute;left:172.90px;top:279.02px;font:11.5px/17.56px 'Liberation Mono', monospace;letter-spacing:0px;white-space:pre;-webkit-text-stroke:0.15px currentColor;"><span style="color:#f5905e">&quot;rank_commission&quot;</span><span style="color:#d8d8d8">: </span><span style="color:#b8e2bd">2</span></div><div style="position:absolute;left:60.60px;top:296.58px;width:1px;height:17.56px;background:#3f3f3f;"></div><div style="position:absolute;left:88.20px;top:296.58px;width:1px;height:17.56px;background:#3f3f3f;"></div><div style="position:absolute;left:115.80px;top:296.58px;width:1px;height:17.56px;background:#3f3f3f;"></div><div style="position:absolute;right:412.50px;top:296.58px;font:11.5px/17.56px 'Liberation Mono', monospace;color:#9a9a9a;white-space:pre;-webkit-text-stroke:0.2px #9a9a9a;">89</div><div style="position:absolute;left:145.30px;top:296.58px;font:11.5px/17.56px 'Liberation Mono', monospace;letter-spacing:0px;white-space:pre;-webkit-text-stroke:0.15px currentColor;"><span style="color:#d8d8d8">},</span></div><div style="position:absolute;left:60.60px;top:314.14px;width:1px;height:17.56px;background:#3f3f3f;"></div><div style="position:absolute;left:88.20px;top:314.14px;width:1px;height:17.56px;background:#3f3f3f;"></div><div style="position:absolute;left:115.80px;top:314.14px;width:1px;height:17.56px;background:#3f3f3f;"></div><div style="position:absolute;right:412.50px;top:314.14px;font:11.5px/17.56px 'Liberation Mono', monospace;color:#9a9a9a;white-space:pre;-webkit-text-stroke:0.2px #9a9a9a;">90</div><div style="position:absolute;left:145.30px;top:314.14px;font:11.5px/17.56px 'Liberation Mono', monospace;letter-spacing:0px;white-space:pre;-webkit-text-stroke:0.15px currentColor;"><span style="color:#d8d8d8">{</span></div><div style="position:absolute;left:60.60px;top:331.70px;width:1px;height:17.56px;background:#3f3f3f;"></div><div style="position:absolute;left:88.20px;top:331.70px;width:1px;height:17.56px;background:#3f3f3f;"></div><div style="position:absolute;left:115.80px;top:331.70px;width:1px;height:17.56px;background:#3f3f3f;"></div><div style="position:absolute;left:143.40px;top:331.70px;width:1px;height:17.56px;background:#3f3f3f;"></div><div style="position:absolute;right:412.50px;top:331.70px;font:11.5px/17.56px 'Liberation Mono', monospace;color:#9a9a9a;white-space:pre;-webkit-text-stroke:0.2px #9a9a9a;">91</div><div style="position:absolute;left:172.90px;top:331.70px;font:11.5px/17.56px 'Liberation Mono', monospace;letter-spacing:0px;white-space:pre;-webkit-text-stroke:0.15px currentColor;"><span style="color:#f5905e">&quot;login&quot;</span><span style="color:#d8d8d8">: </span><span style="color:#f5905e">&quot;888897362&quot;</span><span style="color:#d8d8d8">,</span></div><div style="position:absolute;left:60.60px;top:349.26px;width:1px;height:17.56px;background:#3f3f3f;"></div><div style="position:absolute;left:88.20px;top:349.26px;width:1px;height:17.56px;background:#3f3f3f;"></div><div style="position:absolute;left:115.80px;top:349.26px;width:1px;height:17.56px;background:#3f3f3f;"></div><div style="position:absolute;left:143.40px;top:349.26px;width:1px;height:17.56px;background:#3f3f3f;"></div><div style="position:absolute;right:412.50px;top:349.26px;font:11.5px/17.56px 'Liberation Mono', monospace;color:#9a9a9a;white-space:pre;-webkit-text-stroke:0.2px #9a9a9a;">92</div><div style="position:absolute;left:172.90px;top:349.26px;font:11.5px/17.56px 'Liberation Mono', monospace;letter-spacing:0px;white-space:pre;-webkit-text-stroke:0.15px currentColor;"><span style="color:#f5905e">&quot;name&quot;</span><span style="color:#d8d8d8">: </span><span style="color:#f5905e">&quot;Rajesh Sahani&quot;</span><span style="color:#d8d8d8">,</span></div><div style="position:absolute;left:60.60px;top:366.82px;width:1px;height:17.56px;background:#3f3f3f;"></div><div style="position:absolute;left:88.20px;top:366.82px;width:1px;height:17.56px;background:#3f3f3f;"></div><div style="position:absolute;left:115.80px;top:366.82px;width:1px;height:17.56px;background:#3f3f3f;"></div><div style="position:absolute;left:143.40px;top:366.82px;width:1px;height:17.56px;background:#3f3f3f;"></div><div style="position:absolute;right:412.50px;top:366.82px;font:11.5px/17.56px 'Liberation Mono', monospace;color:#9a9a9a;white-space:pre;-webkit-text-stroke:0.2px #9a9a9a;">93</div><div style="position:absolute;left:172.90px;top:366.82px;font:11.5px/17.56px 'Liberation Mono', monospace;letter-spacing:0px;white-space:pre;-webkit-text-stroke:0.15px currentColor;"><span style="color:#f5905e">&quot;account_type&quot;</span><span style="color:#d8d8d8">: </span><span style="color:#f5905e">&quot;Standard&quot;</span><span style="color:#d8d8d8">,</span></div><div style="position:absolute;left:60.60px;top:384.38px;width:1px;height:17.56px;background:#3f3f3f;"></div><div style="position:absolute;left:88.20px;top:384.38px;width:1px;height:17.56px;background:#3f3f3f;"></div><div style="position:absolute;left:115.80px;top:384.38px;width:1px;height:17.56px;background:#3f3f3f;"></div><div style="position:absolute;left:143.40px;top:384.38px;width:1px;height:17.56px;background:#3f3f3f;"></div><div style="position:absolute;right:412.50px;top:384.38px;font:11.5px/17.56px 'Liberation Mono', monospace;color:#9a9a9a;white-space:pre;-webkit-text-stroke:0.2px #9a9a9a;">94</div><div style="position:absolute;left:172.90px;top:384.38px;font:11.5px/17.56px 'Liberation Mono', monospace;letter-spacing:0px;white-space:pre;-webkit-text-stroke:0.15px currentColor;"><span style="color:#f5905e">&quot;account_group&quot;</span><span style="color:#d8d8d8">: </span><span style="color:#f5905e">&quot;Majestyfx\\A-Book\\Standard&quot;</span><span style="color:#d8d8d8">,</span></div><div style="position:absolute;left:60.60px;top:401.94px;width:1px;height:17.56px;background:#3f3f3f;"></div><div style="position:absolute;left:88.20px;top:401.94px;width:1px;height:17.56px;background:#3f3f3f;"></div><div style="position:absolute;left:115.80px;top:401.94px;width:1px;height:17.56px;background:#3f3f3f;"></div><div style="position:absolute;left:143.40px;top:401.94px;width:1px;height:17.56px;background:#3f3f3f;"></div><div style="position:absolute;right:412.50px;top:401.94px;font:11.5px/17.56px 'Liberation Mono', monospace;color:#9a9a9a;white-space:pre;-webkit-text-stroke:0.2px #9a9a9a;">95</div><div style="position:absolute;left:172.90px;top:401.94px;font:11.5px/17.56px 'Liberation Mono', monospace;letter-spacing:0px;white-space:pre;-webkit-text-stroke:0.15px currentColor;"><span style="color:#f5905e">&quot;email&quot;</span><span style="color:#d8d8d8">: </span><span style="color:#f5905e">&quot;rsahani47210@gmail.com&quot;</span><span style="color:#d8d8d8">,</span></div><div style="position:absolute;left:60.60px;top:419.50px;width:1px;height:17.56px;background:#3f3f3f;"></div><div style="position:absolute;left:88.20px;top:419.50px;width:1px;height:17.56px;background:#3f3f3f;"></div><div style="position:absolute;left:115.80px;top:419.50px;width:1px;height:17.56px;background:#3f3f3f;"></div><div style="position:absolute;left:143.40px;top:419.50px;width:1px;height:17.56px;background:#3f3f3f;"></div><div style="position:absolute;right:412.50px;top:419.50px;font:11.5px/17.56px 'Liberation Mono', monospace;color:#9a9a9a;white-space:pre;-webkit-text-stroke:0.2px #9a9a9a;">96</div><div style="position:absolute;left:172.90px;top:419.50px;font:11.5px/17.56px 'Liberation Mono', monospace;letter-spacing:0px;white-space:pre;-webkit-text-stroke:0.15px currentColor;"><span style="color:#f5905e">&quot;tier&quot;</span><span style="color:#d8d8d8">: </span><span style="color:#b8e2bd">1</span><span style="color:#d8d8d8">,</span></div></div><div style="position:absolute;left:1580.8px;top:225.3px;width:16.2px;height:425px;background:#262626;"></div><div style="position:absolute;left:1584.3px;top:273.8px;width:8.9px;height:17.1px;background:#9b9b9b;border-radius:4.5px;"></div><div style="position:absolute;left:1148.8px;top:654px;width:276.7px;height:9.8px;background:#9b9b9b;border-radius:5px;"></div><svg style="position:absolute;left:0;top:0" width="1600" height="728" viewBox="0 0 1600 728" fill="none" stroke="#c9c9c9" stroke-width="1.25" stroke-linecap="round" stroke-linejoin="round">
<!-- inspect -->
<path d="M1030.5 20.6 H1025.3 a2.2 2.2 0 0 1 -2.2 -2.2 V11.3 a2.2 2.2 0 0 1 2.2 -2.2 H1036.9 a2.2 2.2 0 0 1 2.2 2.2 V17.2"/>
<path d="M1031.6 17.4 L1032 23.7 L1033.7 21.6 L1037.6 21.3 Z"/>
<!-- device -->
<path d="M1056.3 12 V10.4 a2 2 0 0 1 2 -2 H1066.8 a2 2 0 0 1 2 2 V17.4 a2 2 0 0 1 -2 2 H1060"/>
<rect x="1052.2" y="13.6" width="6" height="10.3" rx="1.4"/>
<path d="M1054.6 21.6 H1055.8"/>
<path d="M1060.5 17.2 H1063"/>
<!-- dock -->
<rect x="1082.6" y="8.6" width="14.4" height="14.4" rx="2.4"/>
<rect x="1083.2" y="9.2" width="3.6" height="13.2" fill="#bdbdbd" stroke="none"/>
<!-- home -->
<path d="M1120.3 14.5 L1128.4 7.2 L1136.5 14.5 V22 a1.6 1.6 0 0 1 -1.6 1.6 H1132.6 V18.7 a1.8 1.8 0 0 0 -1.8 -1.8 H1126 a1.8 1.8 0 0 0 -1.8 1.8 V23.6 H1121.9 a1.6 1.6 0 0 1 -1.6 -1.6 Z"/>
<!-- </> -->
<path d="M1165.5 11 L1160.7 15.8 L1165.5 20.6"/>
<path d="M1173.9 11 L1178.7 15.8 L1173.9 20.6"/>
<path d="M1171.8 8 L1167.6 23.5"/>
<!-- console -->
<path d="M1212.4 18 V10.4 a2 2 0 0 0 -2 -2 H1200.6 a2 2 0 0 0 -2 2 V21.3 a2 2 0 0 0 2 2 H1208"/>
<path d="M1198.8 11.9 H1212.2"/>
<path d="M1201.4 16 L1203.8 18.3 L1201.4 20.6"/>
<path d="M1205.4 20.5 H1210.4"/>
<circle cx="1215.2" cy="23" r="5.1" fill="#e5736b" stroke="#1f1f1f" stroke-width="1"/>
<path d="M1213.9 21.7 L1216.5 24.3 M1216.5 21.7 L1213.9 24.3" stroke="#5a1f1c" stroke-width="1"/>
<!-- bug -->
<rect x="1239.4" y="11.2" width="7.8" height="12.8" rx="3.9" stroke-width="1.4"/>
<path d="M1241.6 7.3 V10.6 M1245 7.3 V10.6" stroke-width="1.3"/>
<path d="M1239.4 15.4 Q1235.6 14.2 1235.6 8.4 M1247.2 15.4 Q1251 14.2 1251 8.4 M1234.2 16.5 H1239.4 M1247.2 16.5 H1252.4 M1239.4 19.6 Q1235.6 20.6 1235.6 24 M1247.2 19.6 Q1251 20.6 1251 24" stroke-width="1.3"/>
<!-- wifi -->
<path d="M1266 14.8 Q1275.3 5.2 1284.6 14.8" stroke="#e4e4e4" stroke-width="1.5"/>
<path d="M1268.7 17.8 Q1275.3 9.2 1281.9 17.8" stroke="#e4e4e4" stroke-width="1.5"/>
<path d="M1271.2 20.4 Q1275.3 12.4 1279.4 20.4" stroke="#e4e4e4" stroke-width="1.5"/>
<circle cx="1275.2" cy="21.7" r="1.5" fill="#e4e4e4" stroke="none"/>
<!-- perf -->
<path d="M1357 16.8 A10 10 0 0 1 1376.2 16.8" stroke-width="1.2"/>
<path d="M1357.6 15.6 L1360 16.9 M1366.6 8.9 V11.4 M1375.6 15.6 L1373.2 16.9" stroke-width="1.2"/>
<path d="M1365 19.6 L1370.9 11.3 L1368 20.9 A1.55 1.55 0 0 1 1365 19.6 Z" stroke-width="1.1"/>
<!-- chip -->
<rect x="1396.6" y="10.3" width="12.8" height="12.8" rx="2.8"/>
<circle cx="1403" cy="16.7" r="2.6"/>
<path d="M1400.3 7.6 V10 M1403 7.6 V10 M1405.7 7.6 V10 M1400.3 23.4 V25.6 M1403 23.4 V25.6 M1405.7 23.4 V25.6 M1394 14 H1396.4 M1394 16.7 H1396.4 M1394 19.4 H1396.4 M1409.6 14 H1412 M1409.6 16.7 H1412 M1409.6 19.4 H1412"/>
<!-- window -->
<rect x="1432.4" y="8.7" width="15" height="15" rx="2.8"/>
<path d="M1432.6 12.3 H1447.2"/>
<!-- plus -->
<path d="M1474 9 V22.7 M1467 15.9 H1481"/>
<!-- dots -->
<circle cx="1513.3" cy="13" r="1" fill="#c9c9c9" stroke="none"/>
<circle cx="1519" cy="13" r="1" fill="#c9c9c9" stroke="none"/>
<circle cx="1524.7" cy="13" r="1" fill="#c9c9c9" stroke="none"/>
<!-- help -->
<circle cx="1548.5" cy="13" r="8.1"/>
<path d="M1546.2 10.6 a2.3 2.3 0 1 1 3.5 2 c-0.9 0.6 -1.2 1 -1.2 2.1"/>
<circle cx="1548.5" cy="17.2" r="0.8" fill="#c9c9c9" stroke="none"/>
<!-- close -->
<path d="M1571.2 7.6 L1583.2 19 M1583.2 7.6 L1571.2 19" stroke-width="1.35"/>

<!-- record -->
<circle cx="1031.3" cy="45.7" r="8.3" stroke="#cf6560" stroke-width="1.15"/>
<rect x="1028.3" y="42.7" width="6" height="6" rx="0.6" fill="#ec6b5b" stroke="none"/>
<!-- clear -->
<circle cx="1060.4" cy="45.7" r="8.2"/>
<path d="M1066.2 39.9 L1054.6 51.5"/>
<!-- filter blue -->
<path d="M1081.5 43 H1093.5 M1083.8 47.3 H1093.5 M1086 51.4 H1091.6" stroke="#8ab4f8" stroke-width="1.4"/>
<circle cx="1094.4" cy="41" r="4.8" fill="#7eaaf5" stroke="#292929" stroke-width="0.8"/>
<path d="M1093 39.6 L1095.8 42.4 M1095.8 39.6 L1093 42.4" stroke="#1b2a44" stroke-width="1"/>
<!-- search -->
<circle cx="1117.1" cy="43.4" r="5.3"/>
<path d="M1120.9 47.2 L1125.6 52.6"/>
<!-- throttle triangle -->
<path d="M1438.5 43.2 H1449.5 L1444 48.8 Z" fill="#a6a6a6" stroke="none"/>
<!-- wifi gear -->
<path d="M1462.3 44 Q1470 36.5 1477.8 43.5" stroke-width="1.2"/>
<path d="M1464.6 46.8 Q1470 41.6 1474.6 45.4" stroke-width="1.2"/>
<path d="M1467 49.6 Q1468.6 47.9 1470.2 47.6" stroke-width="1.2"/>
<path d="M1473.29 47.40 L1473.50 45.89 L1475.30 45.89 L1475.51 47.40 L1476.45 47.94 L1477.86 47.37 L1478.76 48.92 L1477.55 49.86 L1477.55 50.94 L1478.76 51.88 L1477.86 53.43 L1476.45 52.86 L1475.51 53.40 L1475.30 54.91 L1473.50 54.91 L1473.29 53.40 L1472.35 52.86 L1470.94 53.43 L1470.04 51.88 L1471.25 50.94 L1471.25 49.86 L1470.04 48.92 L1470.94 47.37 L1472.35 47.94 Z" fill="#dcdcdc" stroke="#dcdcdc" stroke-width="0.6"/>
<circle cx="1474.4" cy="50.4" r="1.2" fill="#292929" stroke="none"/>
<!-- upload -->
<path d="M1492.2 37.6 H1504.8 M1498.5 53.2 V40.6 M1493.6 45.4 L1498.5 40.6 L1503.4 45.4"/>
<!-- download -->
<path d="M1522 53.3 H1534.5 M1528.3 37.6 V51 M1522.8 45.8 L1528.3 51.3 L1533.8 45.8"/>
<!-- gear -->
<path d="M1574.81 39.73 L1575.44 37.41 L1578.16 37.41 L1578.79 39.73 L1580.89 40.94 L1583.21 40.33 L1584.57 42.69 L1582.88 44.38 L1582.88 46.82 L1584.57 48.51 L1583.21 50.87 L1580.89 50.26 L1578.79 51.47 L1578.16 53.79 L1575.44 53.79 L1574.81 51.47 L1572.71 50.26 L1570.39 50.87 L1569.03 48.51 L1570.72 46.82 L1570.72 44.38 L1569.03 42.69 L1570.39 40.33 L1572.71 40.94 Z" stroke-width="1.2"/>
<circle cx="1576.8" cy="45.6" r="2.3" stroke-width="1.2"/>
<!-- filter icon row3 -->
<path d="M1031.2 70 H1041.3 M1033 73.9 H1039.5 M1034.8 77.3 H1037.7" stroke="#b0b0b0" stroke-width="1.3"/>
<!-- more filters triangle -->
<path d="M1575.3 71.2 H1583.2 L1579.25 76.8 Z" fill="#c9c9c9" stroke="none"/>
<!-- close X tabs -->
<path d="M1145.2 205.8 L1156.7 217.3 M1156.7 205.8 L1145.2 217.3" stroke="#bdbdbd" stroke-width="1.2"/>
<!-- code scroll arrows -->
<path d="M1585 238.6 H1593 L1589 232.4 Z" fill="#a8a8a8" stroke="none"/>
<path d="M1584.8 638.5 H1592.8 L1588.8 644.5 Z" fill="#a8a8a8" stroke="none"/>
<path d="M1142.3 655.8 V662.6 L1136 659.2 Z" fill="#a8a8a8" stroke="none"/>
<path d="M1568.4 655.8 V662.6 L1574.6 659.2 Z" fill="#a8a8a8" stroke="none"/>
<!-- drawer plus -->
<path d="M1215.4 703.2 V717.6 M1208.2 710.4 H1222.6" stroke-width="1.3"/>
<!-- drawer icons right -->
<path d="M1543.9 705.6 A3.7 3.7 0 1 0 1543.6 712.9" stroke-width="1.2"/>
<path d="M1542.6 704.9 L1544.6 705.2 L1543.6 707.1 Z" fill="#c9c9c9" stroke-width="0.8"/>
<rect x="1545.6" y="709.5" width="11.5" height="6.6" rx="1.5" stroke-width="1.2"/>
<circle cx="1549.3" cy="704.6" r="0.6" fill="#c9c9c9" stroke="none"/>
<circle cx="1552.5" cy="704.6" r="0.6" fill="#c9c9c9" stroke="none"/>
<circle cx="1555.8" cy="704.6" r="0.6" fill="#c9c9c9" stroke="none"/>
<circle cx="1548.4" cy="707.3" r="0.6" fill="#c9c9c9" stroke="none"/>
<circle cx="1556.7" cy="707.3" r="0.6" fill="#c9c9c9" stroke="none"/>
<rect x="1568.9" y="704.4" width="16.3" height="11.5" rx="1.6" stroke-width="1.2"/>
<path d="M1568.9 711.5 H1585.2" stroke-width="1.1"/>
<path d="M1575.2 709.4 L1577 707.1 L1578.8 709.4 Z" fill="#b0b0b0" stroke="#b0b0b0" stroke-width="0.8"/>
<path d="M1577 709 V712.2" stroke="#999" stroke-width="1.1"/>
</svg>
</body></html>
